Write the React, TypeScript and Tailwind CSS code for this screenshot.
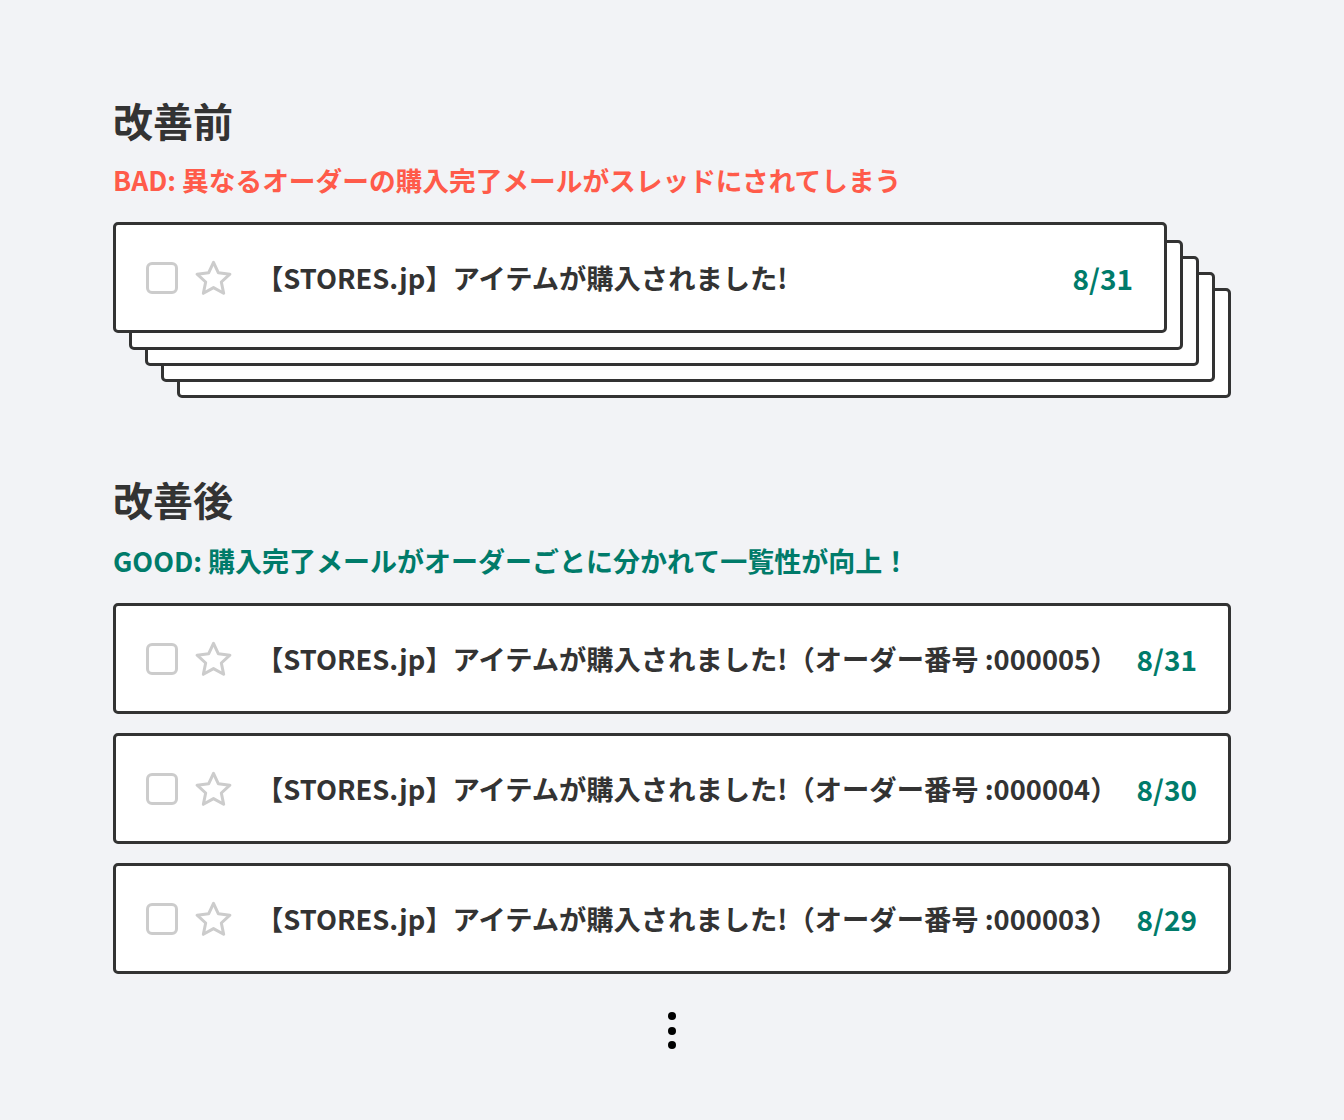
import React from 'react';

const FONT = { fontFamily: '"Noto Sans CJK JP", "Noto Sans", sans-serif' };

function Checkbox() {
  return <div className="w-[32px] h-[32px] rounded-[6px] border-[3px] border-[#cccccc] bg-white shrink-0" />;
}

function Star() {
  return (
    <svg width="37" height="36" viewBox="1.6 1.7 20.8 19.8" className="shrink-0">
      <path
        d="M12 2.8l2.75 5.9 6.45.75-4.8 4.4 1.3 6.35L12 17l-5.7 3.2 1.3-6.35-4.8-4.4 6.45-.75z"
        fill="none"
        stroke="#cccccc"
        strokeWidth="1.7"
        strokeLinejoin="round"
      />
    </svg>
  );
}

function MailRow({ subject, date, className = '' }: { subject: string; date: string; className?: string }) {
  return (
    <div className={`relative flex items-center h-[111px] bg-white border-[3px] border-[#333333] rounded-[5px] pl-[30px] pr-[31px] ${className}`}>
      <Checkbox />
      <div className="ml-[17px]">
        <Star />
      </div>
      <div className="ml-[24px] flex-1 text-[27.3px] font-bold text-[#333333] whitespace-nowrap">{subject}</div>
      <div className="text-[28px] font-bold text-[#007b6a]">{date}</div>
    </div>
  );
}

export default function App() {
  const before = '【STORES.jp】アイテムが購入されました!';
  const after = [
    { no: '000005', date: '8/31' },
    { no: '000004', date: '8/30' },
    { no: '000003', date: '8/29' },
  ];

  return (
    <div className="min-h-[1120px] bg-[#f2f3f6] pt-[92px] px-[113px]" style={FONT}>
      <h2 className="text-[40px] font-bold text-[#333333] leading-[56px]">改善前</h2>
      <p className="mt-[14px] text-[26.7px] font-bold text-[#ff5b4a] leading-[36px]">
        BAD: 異なるオーダーの購入完了メールがスレッドにされてしまう
      </p>

      <div className="relative mt-[24px] w-[1118px] h-[177px]">
        {[4, 3, 2, 1].map(i => (
          <div
            key={i}
            className="absolute w-[1054px] h-[110px] bg-white border-[3px] border-[#333333] rounded-[5px]"
            style={{ left: i * 16, top: i * 16 + 2 }}
          />
        ))}
        <MailRow subject={before} date="8/31" className="w-[1054px] h-[110px]" />
      </div>

      <h2 className="mt-[72px] text-[40px] font-bold text-[#333333] leading-[56px]">改善後</h2>
      <p className="mt-[16px] text-[27px] font-bold text-[#007b6a] leading-[36px]">
        GOOD: 購入完了メールがオーダーごとに分かれて一覧性が向上！
      </p>

      <div className="mt-[24px] flex flex-col gap-[19px] w-[1118px]">
        {after.map(a => (
          <MailRow key={a.no} subject={`${before}（オーダー番号 :${a.no}）`} date={a.date} />
        ))}
      </div>

      <div className="mt-[38px] flex flex-col items-center gap-[6.5px] w-[1118px]">
        <div className="w-[8px] h-[8px] rounded-full bg-black" />
        <div className="w-[8px] h-[8px] rounded-full bg-black" />
        <div className="w-[8px] h-[8px] rounded-full bg-black" />
      </div>
    </div>
  );
}
